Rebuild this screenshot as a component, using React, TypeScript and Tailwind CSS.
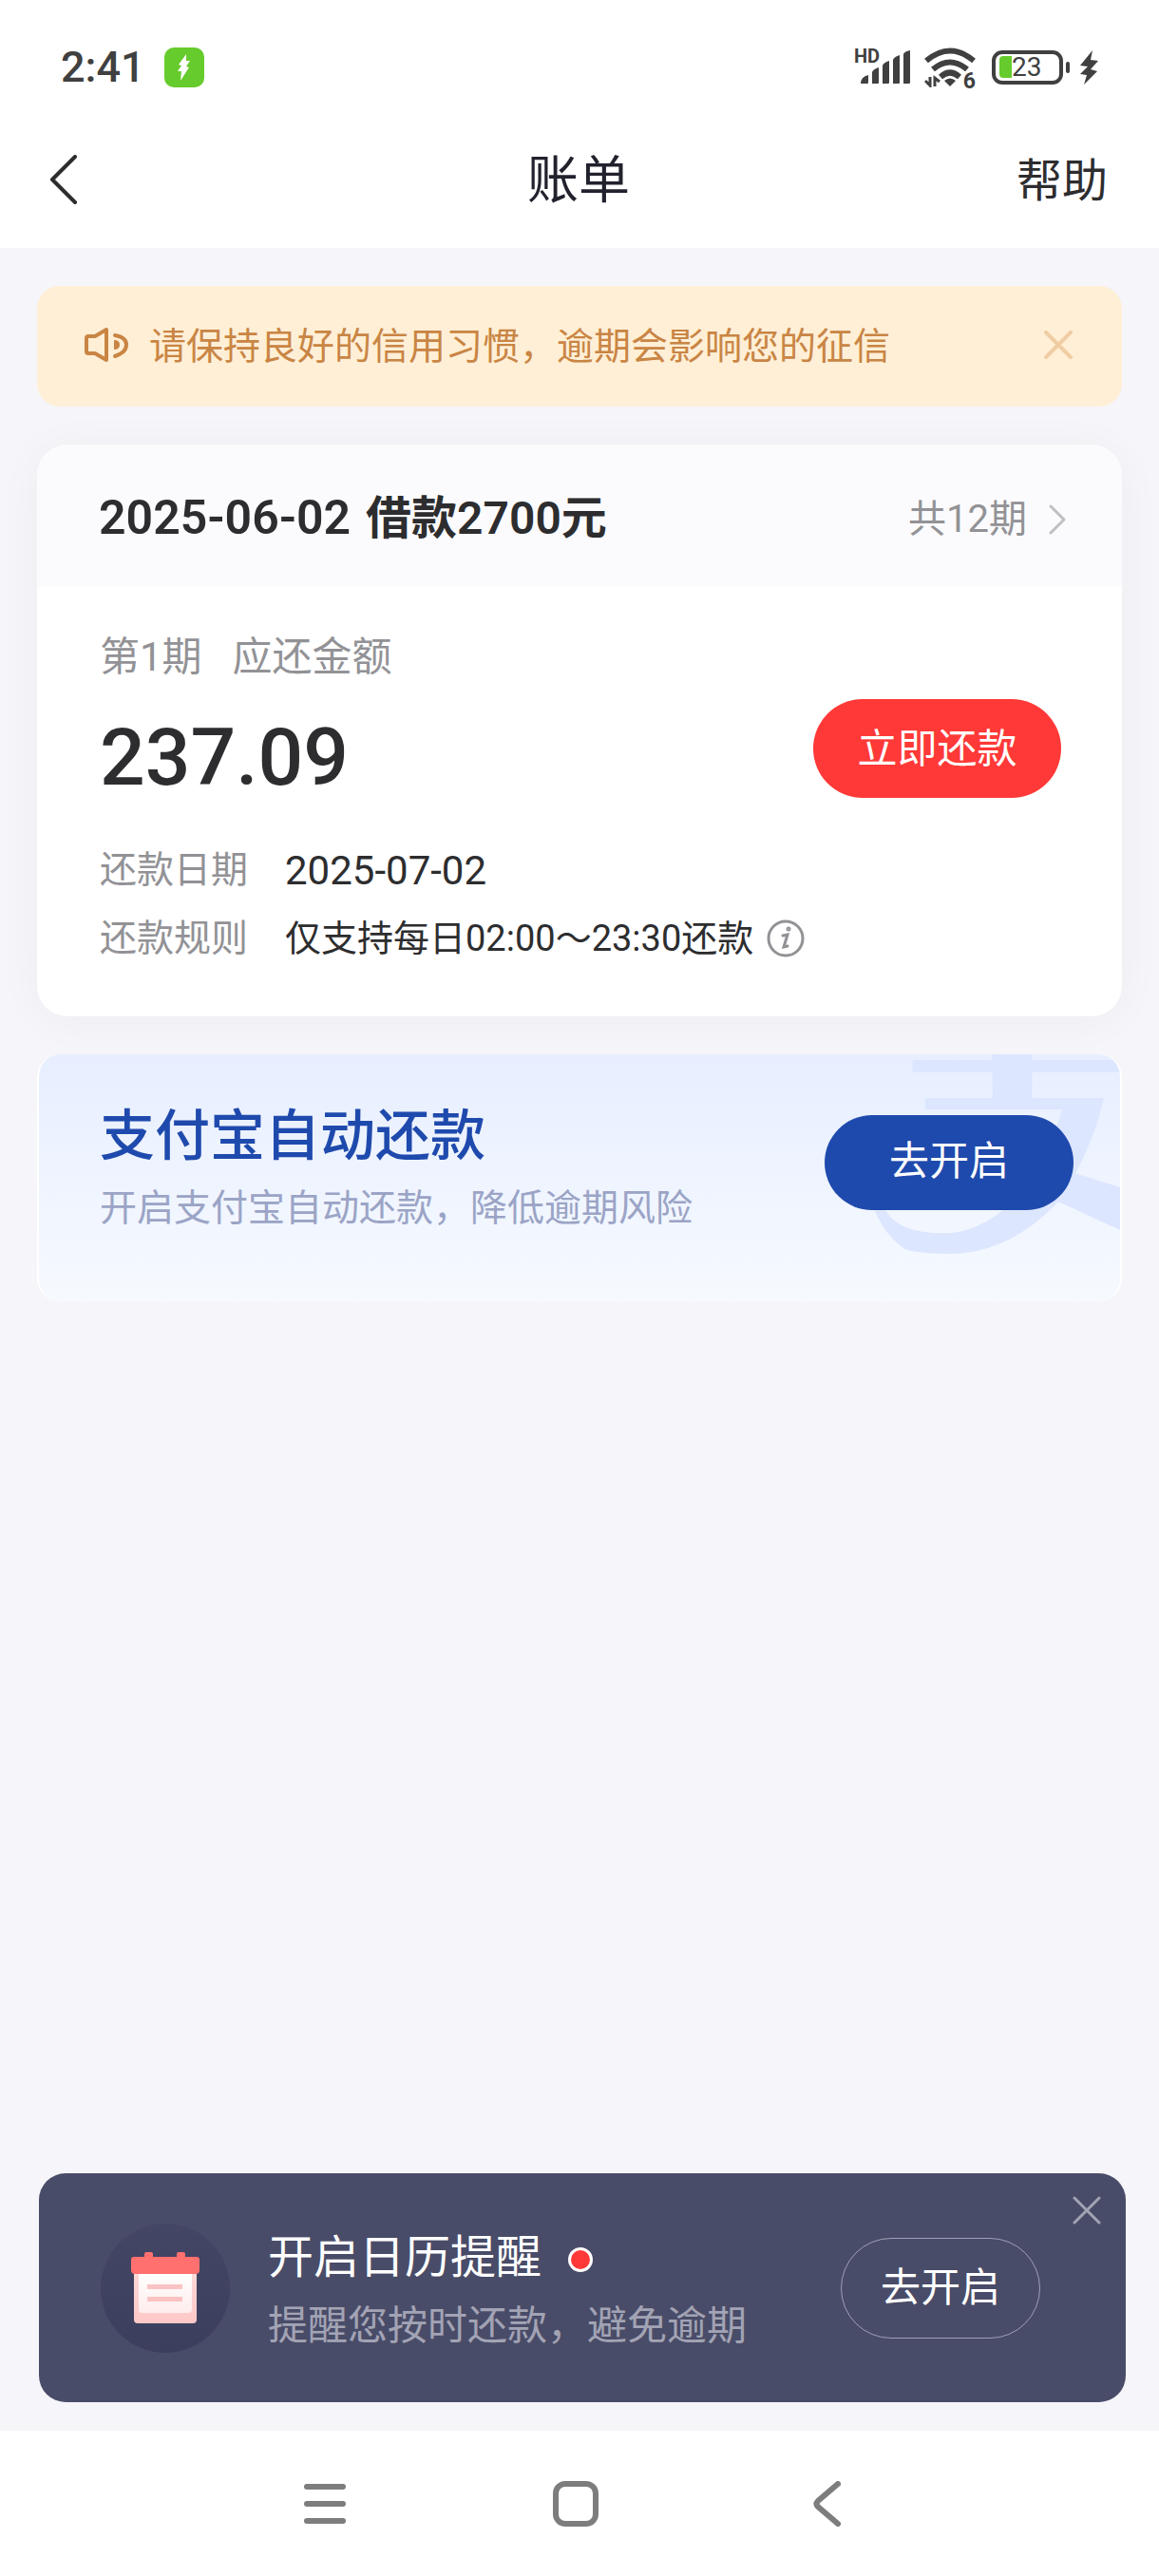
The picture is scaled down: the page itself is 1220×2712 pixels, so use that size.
const rows = [
  { label: "还款日期", value: "2025-07-02", style: "text-[42px]" },
  { label: "还款规则", value: "仅支持每日02:00～23:30还款", style: "text-[38px]", info: true },
];

function StatusBar() {
  return (
    <div className="flex h-[116px] items-center justify-between pt-[26px] pr-16 pl-16 text-[#404040]">
      <div className="flex items-center gap-5">
        <span className="text-[45px] leading-[54px] font-medium">2:41</span>
        <span className="flex size-[42px] items-center justify-center rounded-[10px] bg-[#66cb2c]">
          <svg viewBox="0 0 14 28" className="h-7 w-[14px]" fill="#fff">
            <path d="M9 0 1 11l3 1-4 6h4l-1 10 9-14-3-1 4-6H9z" />
          </svg>
        </span>
      </div>
      <div className="flex items-center">
        <div className="relative mr-[14px] h-[38px] w-[60px]">
          <span className="absolute -top-[4px] left-0 text-[20px] leading-[22px] font-bold">HD</span>
          <svg viewBox="0 0 60 38" className="size-full" fill="currentColor">
            <path d="M7 36q0-7 8-9v8q0 1-1 1H8zM19 24q1-3 7-5v16q0 1-1 1h-6zM30 17q1-3 7-5v23q0 1-1 1h-6zM41 11q1-3 7-5v29q0 1-1 1h-6zM52 5q1-3 7-4v34q0 1-1 1h-6z" />
          </svg>
        </div>
        <div className="relative mr-[17px] h-[42px] w-[54px]">
          <svg viewBox="0 0 54 42" className="size-full" fill="none" stroke="currentColor" strokeWidth="6">
            <path d="M2 14q25-21 50 0M9 23q18-15 36 0M17 31q10-9 20 0" />
            <path d="M27 41l-6-6q6-5 12 0z" fill="currentColor" stroke="none" />
            <path d="M1 35l5 5v-9M11 41V32l5 4" strokeWidth="3" />
          </svg>
          <span className="absolute right-0 -bottom-[3px] bg-white text-[23px] leading-[18px] font-bold">6</span>
        </div>
        <div className="relative mr-[8px] flex h-9 w-[84px] items-center">
          <svg viewBox="0 0 84 36" className="absolute inset-0 size-full">
            <rect x="2" y="2" width="71" height="32" rx="9" fill="none" stroke="currentColor" strokeWidth="4" />
            <path d="M12 6h9v23h-9q-4 0-4-4V10q0-4 4-4z" fill="#66cb2c" />
            <rect x="78" y="12" width="4" height="12" rx="2" fill="currentColor" />
          </svg>
          <span className="relative pl-[21px] text-[28px] leading-9">23</span>
        </div>
        <svg viewBox="0 0 20 36" className="h-9 w-5" fill="currentColor">
          <path d="M14 0 1 16l8 1-8 8 7 1-3 10 14-14-7-2 8-9-8-1z" />
        </svg>
      </div>
    </div>
  );
}

function Cross({ className }: { className: string }) {
  return (
    <svg viewBox="0 0 30 30" className={className} fill="none" stroke="currentColor" strokeLinecap="round">
      <path d="M2 2l26 26M28 2 2 28" />
    </svg>
  );
}

function CalendarIcon() {
  return (
    <span className="flex size-[136px] items-center justify-center rounded-full bg-linear-to-b from-[#444665] to-[#3c3e5d]">
      <svg viewBox="0 0 74 76" className="h-[76px] w-[74px]">
        <defs>
          <linearGradient id="paper" x1="0" y1="0" x2="0" y2="1">
            <stop offset="0" stopColor="#ffdada" />
            <stop offset="1" stopColor="#ffc8c8" />
          </linearGradient>
          <linearGradient id="sheet" x1="0" y1="0" x2="0" y2="1">
            <stop offset="0" stopColor="#fff" />
            <stop offset="1" stopColor="#ffeded" />
          </linearGradient>
        </defs>
        <rect x="4" y="14" width="66" height="61" rx="4" fill="url(#paper)" />
        <path d="M9 20h56v40q0 4-4 4H13q-4 0-4-4z" fill="url(#sheet)" />
        <path d="M15 5V2q0-2 2-2h5q2 0 2 2v3h25V2q0-2 2-2h5q2 0 2 2v3h12q3 0 3 3v11q0 4-4 4H5q-4 0-4-4V8q0-3 3-3z" fill="#ff706f" />
        <path d="M18 34h37v5H18zM18 47h37v5H18z" fill="#fac3c3" />
      </svg>
    </span>
  );
}

export default function App() {
  return (
    <div className="flex min-h-screen flex-col bg-[#f5f5fa] font-['Roboto','Noto_Sans_CJK_SC',sans-serif] text-[#2d2d2f]">
      <header className="bg-white">
        <StatusBar />
        <div className="grid h-[145px] grid-cols-3 items-center pr-[54px] pl-[52px]">
          <button type="button" aria-label="返回">
            <svg viewBox="0 0 30 52" className="h-[52px] w-[30px]" fill="none" stroke="currentColor" strokeWidth="4" strokeLinecap="round" strokeLinejoin="round">
              <path d="M27 2 3 26l24 24" />
            </svg>
          </button>
          <h1 className="pt-1 text-center text-[54px] leading-[72px] text-[#22222e]">账单</h1>
          <a href="#help" className="pt-1 text-right text-[48px] leading-[64px]">帮助</a>
        </div>
      </header>

      <main className="flex flex-1 flex-col">
        <div className="flex flex-col gap-10 px-[39px] pt-10">
          <div className="flex h-[127px] items-center rounded-3xl bg-[#ffefd6] pr-[52px] pl-12 text-[#c98544]">
            <svg viewBox="0 0 48 38" className="mr-[22px] mb-1 h-[38px] w-12" fill="none" stroke="currentColor" strokeWidth="4" strokeLinejoin="round" strokeLinecap="round">
              <path d="M6 10h7L25 3v32l-12-7H6q-2 0-2-2V12q0-2 2-2z" />
              <path d="M34 9q12 2 12 10T34 31" />
              <path d="M33 14q6 0 6 5t-6 5z" fill="currentColor" stroke="none" />
            </svg>
            <p className="flex-1 text-[39px] leading-[56px]">请保持良好的信用习惯，逾期会影响您的征信</p>
            <button type="button" aria-label="关闭提示" className="mb-1 text-[#f0cda3]">
              <Cross className="size-[30px] stroke-[4px]" />
            </button>
          </div>

          <section className="overflow-hidden rounded-[32px] bg-white shadow-[0_4px_48px_rgba(40,40,60,0.04)]">
            <div className="flex h-[150px] items-center justify-between bg-[#fbfbfd] pt-1 pr-[58px] pl-[65px]">
              <h2 className="text-[48px] leading-[64px] font-semibold">
                <span className="mr-1 text-[50px]">2025-06-02</span> 借款2700元
              </h2>
              <a href="#plan" className="flex items-center gap-[22px] pt-1 text-[40px] leading-[56px] text-[#929296]">
                共12期
                <svg viewBox="0 0 20 32" className="h-8 w-5" fill="none" stroke="#bfbfc4" strokeWidth="3" strokeLinecap="round" strokeLinejoin="round">
                  <path d="M3 2l14 14L3 30" />
                </svg>
              </a>
            </div>
            <div className="pt-[46px] pr-16 pb-[46px] pl-[66px]">
              <p className="flex gap-8 text-[42px] leading-[56px] text-[#929296]">
                <span>第1期</span>
                <span>应还金额</span>
              </p>
              <div className="mt-4 flex h-[104px] items-center justify-between">
                <strong className="pt-5 text-[84px] leading-[88px] font-medium">237.09</strong>
                <button type="button" className="h-[104px] w-[261px] rounded-full bg-[#ff3937] text-[42px] text-white">
                  立即还款
                </button>
              </div>
              <dl className="mt-10">
                {rows.map((row) => (
                  <div key={row.label} className="flex h-[72px] items-center">
                    <dt className="w-[195px] text-[39px] leading-[56px] text-[#929296]">{row.label}</dt>
                    <dd className="flex items-center gap-[14px]">
                      <span className={row.style}>{row.value}</span>
                      {row.info && (
                        <button type="button" aria-label="规则说明" className="text-[#929296]">
                          <svg viewBox="0 0 40 40" className="size-10" fill="none" stroke="currentColor" strokeWidth="3">
                            <circle cx="20" cy="20" r="18" />
                            <path d="M17 17l5-1-4 13 4-1" strokeLinecap="round" />
                            <circle cx="23" cy="10" r="1" />
                          </svg>
                        </button>
                      )}
                    </dd>
                  </div>
                ))}
              </dl>
            </div>
          </section>

          <section className="relative flex h-[260px] items-center justify-between overflow-hidden rounded-3xl border-x-2 border-white bg-linear-to-b from-[#e7eeff] to-[#f6faff] pr-[49px] pl-16">
            <svg viewBox="0 60 1140 780" className="absolute top-0 right-0 h-[260px] w-[380px]" fill="#dce6fe">
              <path d="M485 78h250V60h127v18h278v38H862v82h227q-30 130-90 238l141 44v135L945 525Q790 690 600 690q-90 0-140-15-60-40-95-122h35q40 72 180 72 100 0 190-72 120-110 188-319H524v-36h213v-82H485z" />
            </svg>
            <div className="pb-6">
              <h2 className="text-[58px] leading-[80px] font-medium text-[#1f4aad]">支付宝自动还款</h2>
              <p className="mt-2 text-[39px] leading-[56px] text-[#9ba4c6]">开启支付宝自动还款，降低逾期风险</p>
            </div>
            <button type="button" className="relative mb-8 h-[100px] w-[262px] rounded-full bg-[#1f4aad] pb-1 text-[42px] text-white">
              去开启
            </button>
          </section>
        </div>

        <section className="relative mt-auto mr-[35px] mb-[30px] ml-[41px] flex h-[241px] items-center rounded-[28px] bg-[#494c68] pr-[90px] pl-[65px]">
          <CalendarIcon />
          <div className="flex-1 pt-2 pl-10">
            <h2 className="flex items-center gap-7 text-[48px] leading-[72px] text-white">
              开启日历提醒
              <span className="mt-1 size-[26px] rounded-full border-[3px] border-white bg-[#ff3937]" />
            </h2>
            <p className="text-[42px] leading-[72px] text-[#a2a3b4]">提醒您按时还款，避免逾期</p>
          </div>
          <button type="button" className="h-[106px] w-[210px] rounded-full border border-[#9fa0b8] text-[42px] text-white">
            去开启
          </button>
          <button type="button" aria-label="关闭提醒" className="absolute top-6 right-[26px] text-[#a2a3b4]">
            <Cross className="size-[30px] stroke-[3px]" />
          </button>
        </section>
      </main>

      <nav className="flex h-[153px] items-center justify-center bg-white pr-2 text-[#7d7d7d]">
        <button type="button" aria-label="最近任务" className="flex w-[264px] justify-center">
          <svg viewBox="0 0 48 48" className="size-12" fill="none" stroke="currentColor" strokeWidth="6" strokeLinecap="round">
            <path d="M5 6h38M5 24h38M5 42h38" />
          </svg>
        </button>
        <button type="button" aria-label="主页" className="flex w-[264px] justify-center">
          <svg viewBox="0 0 48 48" className="size-12" fill="none" stroke="currentColor" strokeWidth="6">
            <rect x="3" y="3" width="42" height="42" rx="10" />
          </svg>
        </button>
        <button type="button" aria-label="后退" className="flex w-[264px] justify-center">
          <svg viewBox="0 0 30 48" className="h-12 w-[30px]" fill="none" stroke="currentColor" strokeWidth="6" strokeLinecap="round">
            <path d="M27 3 6 21q-3 3 0 6l21 18" />
          </svg>
        </button>
      </nav>
    </div>
  );
}
